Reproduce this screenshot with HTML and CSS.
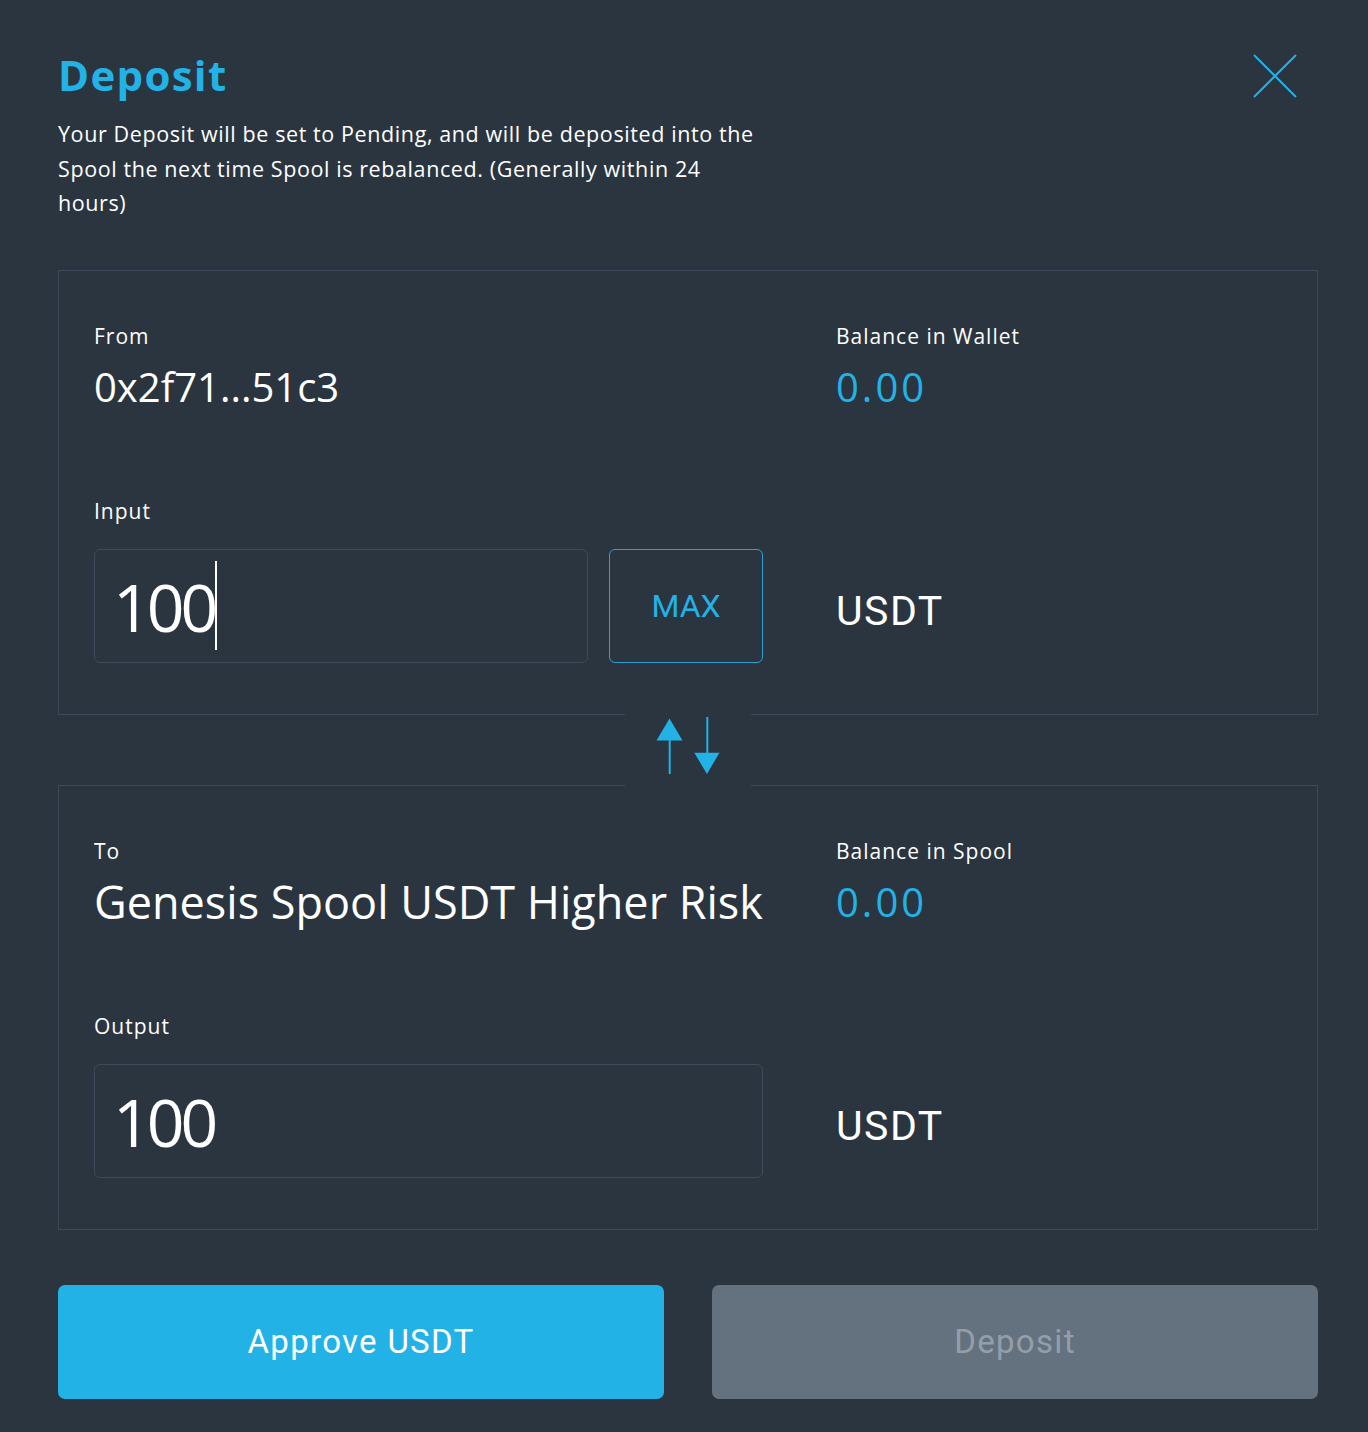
FILE: index.html
```html
<!DOCTYPE html>
<html lang="en">
<head>
<meta charset="utf-8">
<title>Deposit</title>
<link rel="stylesheet" href="styles.css">
</head>
<body>
<div class="modal">
  <header class="modal-header">
    <div class="intro">
      <h1 class="title">Deposit</h1>
      <p class="desc">Your Deposit will be set to Pending, and will be deposited into the Spool the next time Spool is rebalanced. (Generally within 24 hours)</p>
    </div>
    <button class="close" aria-label="Close">
      <svg width="44" height="44" viewBox="0 0 44 44"><path d="M1 1 L43 43 M43 1 L1 43" stroke="#22b2e6" stroke-width="2" fill="none"/></svg>
    </button>
  </header>

  <section class="panel">
    <div class="cell">
      <div class="label">From</div>
      <div class="value">0x2f71...51c3</div>
    </div>
    <div class="cell">
      <div class="label">Balance in Wallet</div>
      <div class="value blue">0.00</div>
    </div>
    <div class="cell">
      <div class="label lower">Input</div>
      <div class="input-row">
        <div class="field narrow"><span class="amount">100</span><span class="caret"></span></div>
        <button class="max">MAX</button>
      </div>
    </div>
    <div class="cell unit-cell">
      <div class="unit">USDT</div>
    </div>
  </section>

  <div class="swap-row">
    <div class="swap">
      <svg width="126" height="74" viewBox="0 -1 126 74">
        <polygon points="44.5,3.5 31.5,25.5 57.5,25.5" fill="#22b2e6"/>
        <line x1="44.7" y1="25" x2="44.7" y2="59" stroke="#22b2e6" stroke-width="2"/>
        <line x1="82.3" y1="2" x2="82.3" y2="38" stroke="#22b2e6" stroke-width="2"/>
        <polygon points="69.3,37.7 94.5,37.7 81.9,58.9" fill="#22b2e6"/>
      </svg>
    </div>
  </div>

  <section class="panel">
    <div class="cell">
      <div class="label">To</div>
      <div class="value big">Genesis Spool USDT Higher Risk</div>
    </div>
    <div class="cell">
      <div class="label">Balance in Spool</div>
      <div class="value blue">0.00</div>
    </div>
    <div class="cell">
      <div class="label lower">Output</div>
      <div class="input-row">
        <div class="field wide"><span class="amount">100</span></div>
      </div>
    </div>
    <div class="cell unit-cell">
      <div class="unit">USDT</div>
    </div>
  </section>

  <div class="actions">
    <button class="btn primary">Approve USDT</button>
    <button class="btn disabled">Deposit</button>
  </div>
</div>
</body>
</html>
```

FILE: styles.css
```css
* { box-sizing: border-box; }
html, body { margin: 0; padding: 0; }
body {
  background: #2a3540;
  color: #ffffff;
  font-family: "Open Sans", "Noto Sans", sans-serif;
  width: 1368px;
  height: 1432px;
  overflow: hidden;
}
.modal {
  padding: 40px 50px 0 58px;
}
.modal-header {
  display: flex;
  justify-content: space-between;
  align-items: flex-start;
}
.title {
  margin: 0;
  font-size: 42px;
  line-height: 70px;
  font-weight: 700;
  color: #22b2e6;
  letter-spacing: 1.3px;
}
.desc {
  margin: 7px 0 0 0;
  width: 705px;
  font-size: 21.5px;
  line-height: 34.5px;
  letter-spacing: 0.6px;
}
.close {
  background: none;
  border: 0;
  padding: 0;
  margin: 14px 21px 0 0;
  width: 44px;
  height: 44px;
  cursor: pointer;
}
.close svg { display: block; }

.panel {
  margin-top: 49px;
  border: 1px solid #3a4a5a;
  padding: 50px 35px 51px 35px;
  display: grid;
  grid-template-columns: 669px 1fr;
  column-gap: 73px;
}
.swap-row + .panel { margin-top: 0; }
.label {
  font-size: 21px;
  line-height: 30px;
  letter-spacing: 1px;
}
.label.lower { margin-top: 84px; }
.value {
  font-size: 40px;
  line-height: 50px;
  margin-top: 11px;
}
.value.big { font-size: 45px; }
.value.blue { color: #22b2e6; letter-spacing: 3px; }

.input-row {
  display: flex;
  gap: 21px;
  margin-top: 23px;
}
.field {
  height: 114px;
  border: 1px solid #3b4b5c;
  border-radius: 6px;
  padding: 0 18px;
  display: flex;
  align-items: center;
}
.field.narrow { width: 494px; }
.field.wide { width: 669px; }
.amount {
  font-size: 66px;
  line-height: 1;
  letter-spacing: -4px;
}
.caret {
  display: block;
  width: 2px;
  height: 89px;
  background: #ffffff;
  margin-left: 1px;
}
.max {
  width: 154px;
  height: 114px;
  border: 1px solid #2a9fd0;
  border-radius: 6px;
  background: transparent;
  color: #22b2e6;
  font-family: Roboto, sans-serif;
  font-size: 32px;
  padding: 0;
}
.unit-cell {
  display: flex;
  align-items: flex-end;
}
.unit {
  font-family: Roboto, sans-serif;
  font-size: 41px;
  letter-spacing: 1.5px;
  line-height: 114px;
  height: 114px;
  padding-top: 5px;
}

.swap-row {
  position: relative;
  height: 72px;
  margin: -1px 0;
}
.swap {
  position: absolute;
  left: 567px;
  top: 0;
  width: 126px;
  height: 72px;
  background: #2a3540;
  z-index: 1;
}
.swap svg { display: block; }

.actions {
  display: grid;
  grid-template-columns: 1fr 1fr;
  column-gap: 48px;
  margin-top: 55px;
}
.btn {
  height: 114px;
  border: 0;
  border-radius: 7px;
  font-family: Roboto, sans-serif;
  font-size: 33px;
  letter-spacing: 1.3px;
  padding: 0;
}
.btn.primary {
  background: #22b2e6;
  color: #ffffff;
}
.btn.disabled {
  background: #64727f;
  color: #939eaa;
}
```
